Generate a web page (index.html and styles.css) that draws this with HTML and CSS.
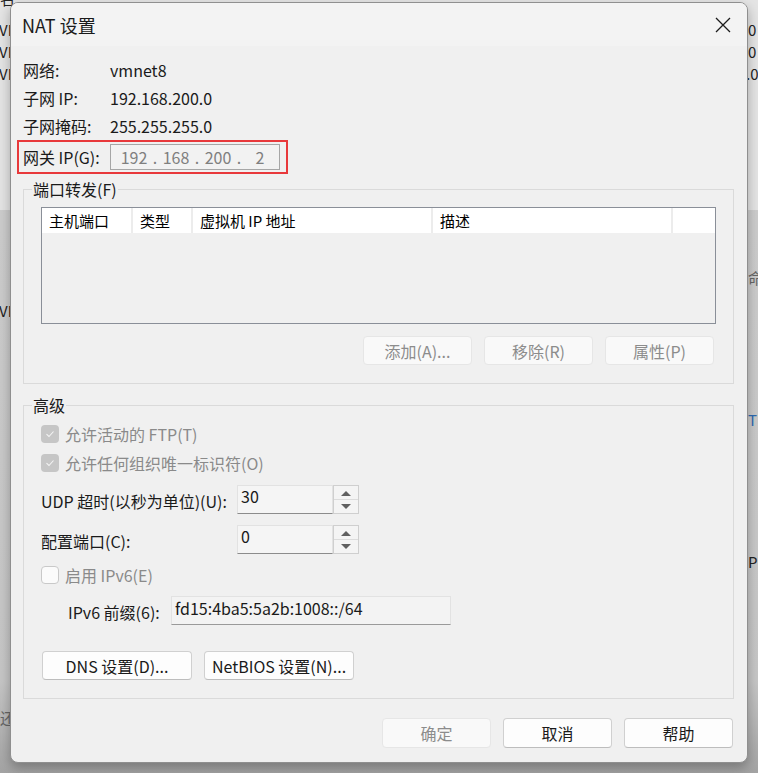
FILE: index.html
```html
<!DOCTYPE html>
<html lang="zh-CN">
<head>
<meta charset="utf-8">
<title>NAT 设置</title>
<link rel="stylesheet" href="styles.css">
</head>
<body>
<div class="desktop">
  <div class="backdrop">
    <div class="bk-top"></div>
    <span class="frag f1">名</span>
    <span class="frag f2">VI</span>
    <span class="frag f3">VI</span>
    <span class="frag f4">VI</span>
    <span class="frag f5">VI</span>
    <span class="frag f6">0</span>
    <span class="frag f7">0</span>
    <span class="frag f8">.0</span>
    <span class="frag f9">命</span>
    <span class="frag f10">T</span>
    <span class="frag f11">P</span>
    <span class="frag f12">还</span>
  </div>

  <div class="dialog">
    <div class="titlebar">
      <span class="title">NAT 设置</span>
      <span class="close">
        <svg width="16" height="16" viewBox="0 0 16 16"><path d="M1 1L15 15M15 1L1 15" stroke="#1b1b1b" stroke-width="1.3" fill="none"/></svg>
      </span>
    </div>

    <div class="body">
      <div class="info">
        <div class="row"><span class="lbl">网络:</span><span>vmnet8</span></div>
        <div class="row"><span class="lbl">子网 IP:</span><span>192.168.200.0</span></div>
        <div class="row"><span class="lbl">子网掩码:</span><span>255.255.255.0</span></div>
      </div>

      <div class="gateway">
        <span class="lbl">网关 IP(G):</span>
        <div class="ipbox">
          <span class="oct">192</span><span class="dot">.</span><span class="oct">168</span><span class="dot">.</span><span class="oct">200</span><span class="dot">.</span><span class="oct">2</span>
        </div>
      </div>

      <fieldset class="group g1">
        <legend>端口转发(F)</legend>
        <div class="list">
          <div class="lhead">
            <div class="col c1">主机端口</div>
            <div class="col c2">类型</div>
            <div class="col c3">虚拟机 IP 地址</div>
            <div class="col c4">描述</div>
            <div class="col c5"></div>
          </div>
        </div>
        <div class="btnrow">
          <button class="btn dis">添加(A)...</button>
          <button class="btn dis">移除(R)</button>
          <button class="btn dis">属性(P)</button>
        </div>
      </fieldset>

      <fieldset class="group g2">
        <legend>高级</legend>
        <div class="cbrow first">
          <span class="cb checked"><svg width="10" height="8" viewBox="0 0 10 8"><path d="M1.5 4.2L4 6.5L8.5 1.5" stroke="#f4f4f4" stroke-width="1.1" fill="none"/></svg></span>
          <span class="dtext">允许活动的 FTP(T)</span>
        </div>
        <div class="cbrow">
          <span class="cb checked"><svg width="10" height="8" viewBox="0 0 10 8"><path d="M1.5 4.2L4 6.5L8.5 1.5" stroke="#f4f4f4" stroke-width="1.1" fill="none"/></svg></span>
          <span class="dtext">允许任何组织唯一标识符(O)</span>
        </div>
        <div class="spinrow r1">
          <span class="slbl">UDP 超时(以秒为单位)(U):</span>
          <div class="spin">
            <div class="sfield">30</div>
            <div class="sbtns">
              <span class="sb"><svg width="12" height="6" viewBox="0 0 12 6"><path d="M1 6L6 1L11 6Z" fill="#606060"/></svg></span>
              <span class="sb"><svg width="12" height="6" viewBox="0 0 12 6"><path d="M1 0L6 5L11 0Z" fill="#606060"/></svg></span>
            </div>
          </div>
        </div>
        <div class="spinrow r2">
          <span class="slbl">配置端口(C):</span>
          <div class="spin">
            <div class="sfield">0</div>
            <div class="sbtns">
              <span class="sb"><svg width="12" height="6" viewBox="0 0 12 6"><path d="M1 6L6 1L11 6Z" fill="#606060"/></svg></span>
              <span class="sb"><svg width="12" height="6" viewBox="0 0 12 6"><path d="M1 0L6 5L11 0Z" fill="#606060"/></svg></span>
            </div>
          </div>
        </div>
        <div class="cbrow third">
          <span class="cb empty"></span>
          <span class="dtext">启用 IPv6(E)</span>
        </div>
        <div class="v6row">
          <span class="v6lbl">IPv6 前缀(6):</span>
          <div class="v6field">fd15:4ba5:5a2b:1008::/64</div>
        </div>
        <div class="dnsrow">
          <button class="btn wide">DNS 设置(D)...</button>
          <button class="btn wide">NetBIOS 设置(N)...</button>
        </div>
      </fieldset>

      <div class="footer">
        <button class="btn dis">确定</button>
        <button class="btn">取消</button>
        <button class="btn">帮助</button>
      </div>
    </div>
  </div>
</div>
</body>
</html>
```
FILE: styles.css
```css
html, body {
  margin: 0;
  padding: 0;
}
body {
  width: 758px;
  height: 773px;
  overflow: hidden;
  font-family: "Noto Sans CJK SC", "Noto Sans", sans-serif;
  font-size: 16px;
  color: #1a1a1a;
}
.desktop {
  position: relative;
  width: 758px;
  height: 773px;
  background: linear-gradient(#cfcfcf, #c6c6c6 88%, #a3a3a3 100%);
  overflow: hidden;
}
.backdrop {
  position: absolute;
  inset: 0;
}
.bk-top {
  height: 210px;
  background: #e4e4e4;
}
.frag {
  position: absolute;
  font-size: 15px;
  line-height: 16px;
  color: #222;
}
.f1 { left: 0; top: -9px; }
.f2 { left: -1px; top: 22px; }
.f3 { left: -1px; top: 44px; }
.f4 { left: -1px; top: 66px; }
.f5 { left: -1px; top: 303px; }
.f6 { left: 748px; top: 22px; }
.f7 { left: 748px; top: 44px; }
.f8 { left: 746px; top: 66px; }
.f9 { left: 748px; top: 270px; color: #666; }
.f10 { left: 748px; top: 412px; color: #2e6ab0; }
.f11 { left: 748px; top: 554px; }
.f12 { left: 0; top: 710px; color: #666; }

.dialog {
  position: absolute;
  left: 10px;
  top: 2px;
  width: 738px;
  height: 761px;
  box-sizing: border-box;
  border: 1px solid #8f8f8f;
  border-radius: 8px;
  overflow: hidden;
  background: #f0f0f0;
  box-shadow: 0 5px 12px rgba(0, 0, 0, 0.28);
  display: flex;
  flex-direction: column;
}
.titlebar {
  height: 43px;
  flex: none;
  display: flex;
  align-items: center;
  background: #f3f3f3;
  padding-left: 11px;
}
.title {
  font-size: 18px;
  color: #1a1a1a;
  line-height: 24px;
}
.close {
  margin-left: auto;
  width: 48px;
  height: 43px;
  display: flex;
  align-items: center;
  justify-content: center;
}
.close svg { display: block; }

.body {
  flex: 1;
  padding: 10px 13px 0 12px;
  display: flex;
  flex-direction: column;
}
.info .row {
  display: flex;
  height: 28px;
  line-height: 28px;
}
.lbl {
  width: 87px;
  flex: none;
}

.gateway {
  display: flex;
  align-items: center;
  width: 271px;
  box-sizing: border-box;
  margin-left: -6px;
  border: 2px solid #e8393b;
  padding: 2px 6px 2px 4px;
}
.ipbox {
  width: 170px;
  height: 26px;
  box-sizing: border-box;
  border: 1px solid #a6a6a6;
  background: #f2f2f2;
  color: #7f7f7f;
  display: flex;
  align-items: center;
  padding-left: 7px;
  line-height: 24px;
}
.oct {
  width: 32px;
  text-align: center;
}
.dot {
  width: 10px;
  text-align: center;
}

.group {
  margin: 5px 0 0 0;
  border: 1px solid #dadada;
  padding: 0 17px 18px 17px;
  min-width: 0;
}
.group legend {
  margin-left: -9px;
  padding: 0 1px;
  line-height: 20px;
}
.list {
  margin-top: 8px;
  height: 117px;
  box-sizing: border-box;
  border: 1px solid #8a8f98;
  background: #f0f0f0;
}
.lhead {
  display: flex;
  height: 25px;
  background: #ffffff;
  font-size: 15px;
  line-height: 25px;
  color: #000;
}
.col {
  box-sizing: border-box;
  padding-left: 7px;
  border-right: 2px solid #ececec;
}
.c1 { width: 91px; }
.c2 { width: 60px; }
.c3 { width: 240px; }
.c4 { width: 240px; }
.c5 { flex: 1; border-right: none; }

.btnrow {
  display: flex;
  justify-content: flex-end;
  gap: 12px;
  margin-top: 12px;
  padding-right: 2px;
}
.btn {
  width: 109px;
  height: 29px;
  box-sizing: border-box;
  font-family: inherit;
  font-size: 16px;
  color: #1a1a1a;
  background: #fdfdfd;
  border: 1px solid #d0d0d0;
  border-bottom-color: #bdbdbd;
  border-radius: 4px;
  padding: 0;
  line-height: 26px;
}
.btn.dis {
  background: #f9f9f9;
  border-color: #e6e6e6;
  color: #8c8c8c;
}
.g2 {
  margin-top: 11px;
}
.cbrow {
  display: flex;
  align-items: center;
  height: 18px;
  margin-top: 11px;
}
.cbrow.first { margin-top: 10px; }
.cbrow.third { margin-top: 12px; }
.cb {
  width: 18px;
  height: 18px;
  box-sizing: border-box;
  border-radius: 4px;
  display: flex;
  align-items: center;
  justify-content: center;
  flex: none;
  margin-right: 6px;
}
.cb.checked {
  background: #c6c6c6;
}
.cb.empty {
  border: 1px solid #c9c9c9;
  background: #fbfbfb;
}
.dtext {
  color: #8a8a8a;
  line-height: 18px;
}
.spinrow {
  display: flex;
  align-items: center;
  height: 29px;
}
.spinrow.r1 { margin-top: 13px; }
.spinrow.r2 { margin-top: 11px; }
.slbl {
  width: 196px;
  flex: none;
  padding-top: 2px;
}
.spin {
  display: flex;
  height: 29px;
}
.sfield {
  width: 96px;
  height: 29px;
  box-sizing: border-box;
  background: #f5f5f5;
  border: 1px solid #e2e2e2;
  border-bottom: 1px solid #8c8c8c;
  padding-left: 3px;
  line-height: 20px;
}
.sbtns {
  width: 26px;
  height: 29px;
  box-sizing: border-box;
  border: 1px solid #cfcfcf;
  display: flex;
  flex-direction: column;
  gap: 1px;
  background: #dcdcdc;
}
.sb {
  flex: 1;
  background: #f4f4f4;
  display: flex;
  align-items: center;
  justify-content: center;
}
.sb svg { display: block; }
.v6row {
  display: flex;
  align-items: center;
  margin-top: 12px;
  height: 29px;
  padding-left: 27px;
}
.v6lbl {
  width: 103px;
  flex: none;
  padding-top: 2px;
}
.v6field {
  width: 280px;
  height: 29px;
  box-sizing: border-box;
  background: #f3f3f3;
  border: 1px solid #e2e2e2;
  border-bottom: 1px solid #9a9a9a;
  padding-left: 3px;
  line-height: 22px;
}
.dnsrow {
  display: flex;
  gap: 12px;
  margin-top: 26px;
  padding-left: 1px;
}
.btn.wide {
  width: 150px;
}
.footer {
  display: flex;
  justify-content: flex-end;
  gap: 12px;
  margin-top: 19px;
  padding-right: 1px;
}
.footer .btn {
  height: 30px;
}
```
